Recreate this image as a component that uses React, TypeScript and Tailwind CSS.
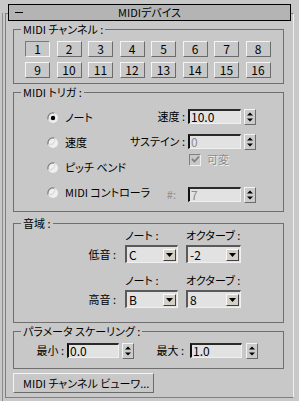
import React from "react";

const FONT = "[font-family:'Noto_Sans_CJK_JP',sans-serif] [font-feature-settings:'palt'] font-normal";

function Group({ label, className, children }: { label: string; className: string; children?: React.ReactNode }) {
  return (
    <div className={`relative ml-[7px] w-[271px] border border-[#6f6f6f] ${className}`}>
      <div className="absolute -top-[8px] left-[7px] bg-[#c8c8c8] px-[2px] leading-[14px] whitespace-nowrap">{label}</div>
      {children}
    </div>
  );
}

function ChBtn({ n, pressed }: { n: number; pressed?: boolean }) {
  return (
    <div
      className={
        pressed
          ? "w-[25px] h-[16px] border border-t-[#7a7a7a] border-l-[#7a7a7a] border-r-[#f4f4f4] border-b-[#f4f4f4] flex items-center justify-center leading-none text-[12px]"
          : "w-[25px] h-[16px] border border-t-[#f4f4f4] border-l-[#f4f4f4] border-r-[#6b6b6b] border-b-[#6b6b6b] flex items-center justify-center leading-none text-[12px]"
      }
    >
      {n}
    </div>
  );
}

function Edit({ v, dis, w }: { v: string; dis?: boolean; w: string }) {
  return (
    <div
      className={`${w} h-[15px] bg-[#e2e2e2] border-t-2 border-l-2 border-t-[#2a2a2a] border-l-[#111] border-r border-b border-r-[#f0f0f0] border-b-[#f0f0f0] flex items-center pl-[1px] leading-none text-[12px] ${
        dis ? "text-[#8c8c8c]" : "text-black"
      }`}
    >
      {v}
    </div>
  );
}

function Spin() {
  return (
    <div className="w-[12px] h-[16px] border border-t-[#f4f4f4] border-l-[#f4f4f4] border-r-[#6b6b6b] border-b-[#6b6b6b] bg-[#cbcbcb] flex items-center justify-center">
      <svg width="10" height="14" viewBox="0 0 10 14">
        <path d="M5 2.5 L8 5.5 L2 5.5 Z" fill="#000" />
        <path d="M2 8.5 L8 8.5 L5 11.5 Z" fill="#000" />
      </svg>
    </div>
  );
}

function Drop({ v, w }: { v: string; w: string }) {
  return (
    <div
      className={`${w} h-[18px] bg-[#e2e2e2] border-t-2 border-l-2 border-t-[#5a5a5a] border-l-[#5a5a5a] border-r border-b border-r-[#f0f0f0] border-b-[#f0f0f0] flex items-center justify-between pl-[2px] pr-[1px] leading-none text-[12px]`}
    >
      <span>{v}</span>
      <div className="w-[13px] h-[12px] bg-[#d4d0c8] border border-t-[#fafafa] border-l-[#fafafa] border-r-[#404040] border-b-[#404040] flex items-center justify-center">
        <svg width="7" height="4" viewBox="0 0 7 4">
          <path d="M0 0 H7 L3.5 4 Z" fill="#000" />
        </svg>
      </div>
    </div>
  );
}

function Radio({ checked }: { checked?: boolean }) {
  return (
    <svg width="12" height="12" viewBox="0 0 12 12" className="shrink-0">
      <circle cx="6" cy="6" r="5" fill="#efefef" />
      <path d="M1.2 7.5 A5 5 0 0 1 7.5 1.2" stroke="#7a7a7a" strokeWidth="1.2" fill="none" />
      <path d="M7.5 1.2 A5 5 0 0 1 1.2 7.5" stroke="#dcdcdc" strokeWidth="1.2" fill="none" />
      {checked && <circle cx="6" cy="6" r="2.2" fill="#000" />}
    </svg>
  );
}

function Label({ t, w, dis }: { t: string; w: string; dis?: boolean }) {
  return (
    <div className={`${w} shrink-0 flex justify-end leading-none whitespace-nowrap ${dis ? "text-[#8c8c8c]" : ""}`}>
      <span>{t}</span>
    </div>
  );
}

export default function App() {
  const row1 = [1, 2, 3, 4, 5, 6, 7, 8];
  const row2 = [9, 10, 11, 12, 13, 14, 15, 16];
  return (
    <div className={`w-[299px] h-[401px] bg-[#c8c8c8] overflow-hidden flex items-start text-[11px] text-black ${FONT}`}>
      <div className="ml-[2px] mt-[13px] w-px h-[388px] bg-[#8c8c8c] shrink-0" />
      <div className="ml-[2px] mt-[13px] w-[289px] h-[385px] border border-[#808080] border-r-[#f0f0f0] flex flex-col shrink-0">
        {/* header */}
        <div className="-mt-[10px] ml-[2px] w-[283px] h-[17px] border border-black bg-[#b4b4b4] grid grid-cols-[1fr_auto_1fr] items-center">
          <div className="ml-[6px] w-[8px] h-px bg-black" />
          <div className="leading-none">MIDIデバイス</div>
          <div />
        </div>

        {/* MIDI channel */}
        <Group label="MIDI チャンネル :" className="mt-[8px] h-[55px]">
          <div className="pt-[11px] pl-[11px] flex flex-col gap-y-[5px]">
            <div className="flex gap-x-[6.5px]">
              {row1.map((n) => (
                <ChBtn key={n} n={n} pressed={n === 1} />
              ))}
            </div>
            <div className="flex gap-x-[6.5px]">
              {row2.map((n) => (
                <ChBtn key={n} n={n} />
              ))}
            </div>
          </div>
        </Group>

        {/* MIDI trigger */}
        <Group label="MIDI トリガ :" className="mt-[8px] h-[120px]">
          <div className="flex">
            <div className="w-[120px] pl-[33px] pt-[12px] flex flex-col shrink-0">
              {[
                ["ノート", true],
                ["速度", false],
                ["ピッチ ベンド", false],
                ["MIDI コントローラ", false],
              ].map(([t, c]) => (
                <div key={t as string} className="h-[25px] flex items-center gap-x-[6px] whitespace-nowrap">
                  <Radio checked={c as boolean} />
                  <span className="leading-none">{t as string}</span>
                </div>
              ))}
            </div>
            <div className="pt-[16px] flex flex-col">
              <div className="h-[15px] flex items-center">
                <Label t="速度 :" w="w-[51px]" />
                <div className="ml-[3px]"><Edit v="10.0" w="w-[53px]" /></div>
                <div className="ml-[3px]"><Spin /></div>
              </div>
              <div className="mt-[10px] h-[15px] flex items-center">
                <Label t="サステイン :" w="w-[51px]" />
                <div className="ml-[3px]"><Edit v="0" dis w="w-[53px]" /></div>
                <div className="ml-[3px]"><Spin /></div>
              </div>
              <div className="mt-[4px] h-[13px] flex items-center pl-[55px] gap-x-[6px]">
                <div className="w-[12px] h-[12px] border border-t-[#808080] border-l-[#808080] border-r-[#f0f0f0] border-b-[#f0f0f0] bg-[#c8c8c8] flex items-center justify-center">
                  <svg width="9" height="9" viewBox="0 0 9 9">
                    <path d="M1 4 L3.5 6.5 L8 1.5" stroke="#808080" strokeWidth="1.8" fill="none" />
                  </svg>
                </div>
                <span className="leading-none text-[#8c8c8c] [text-shadow:1px_1px_0_#f2f2f2]">可変</span>
              </div>
              <div className="mt-[21px] h-[15px] flex items-center">
                <Label t="#:" w="w-[42px]" dis />
                <div className="ml-[12px]"><Edit v="7" dis w="w-[53px]" /></div>
                <div className="ml-[3px]"><Spin /></div>
              </div>
            </div>
          </div>
        </Group>

        {/* range */}
        <Group label="音域 :" className="mt-[11px] h-[100px]">
          <div className="pt-[5px] flex flex-col">
            {[
              ["低音 :", "C", "-2"],
              ["高音 :", "B", "8"],
            ].map(([lab, note, oct], i) => (
              <div key={lab} className={`grid grid-cols-[111px_61px_55px] ${i === 1 ? "mt-[11px]" : ""}`}>
                <div />
                <div className="h-[12px] leading-[12px] whitespace-nowrap">ノート :</div>
                <div className="h-[12px] leading-[12px] whitespace-nowrap">オクターブ :</div>
                <div className="mt-[4px] h-[18px] flex items-center justify-end pr-[9px] leading-none">{lab}</div>
                <div className="mt-[4px]"><Drop v={note} w="w-[53px]" /></div>
                <div className="mt-[4px]"><Drop v={oct} w="w-[55px]" /></div>
              </div>
            ))}
          </div>
        </Group>

        {/* param scaling */}
        <Group label="パラメータ スケーリング :" className="mt-[8px] h-[38px]">
          <div className="pt-[11px] flex items-center h-[26px]">
            <Label t="最小 :" w="w-[50px]" />
            <div className="ml-[3px]"><Edit v="0.0" w="w-[52px]" /></div>
            <div className="ml-[3px]"><Spin /></div>
            <Label t="最大 :" w="w-[50px]" />
            <div className="ml-[6px]"><Edit v="1.0" w="w-[52px]" /></div>
            <div className="ml-[4px]"><Spin /></div>
          </div>
        </Group>

        <div className="mt-[4px] ml-[7px] w-[141px] h-[20px] border border-t-[#f4f4f4] border-l-[#f4f4f4] border-r-[#6b6b6b] border-b-[#6b6b6b] flex items-center pl-[9px] leading-none whitespace-nowrap">
          MIDI チャンネル ビューワ...
        </div>
      </div>
    </div>
  );
}
